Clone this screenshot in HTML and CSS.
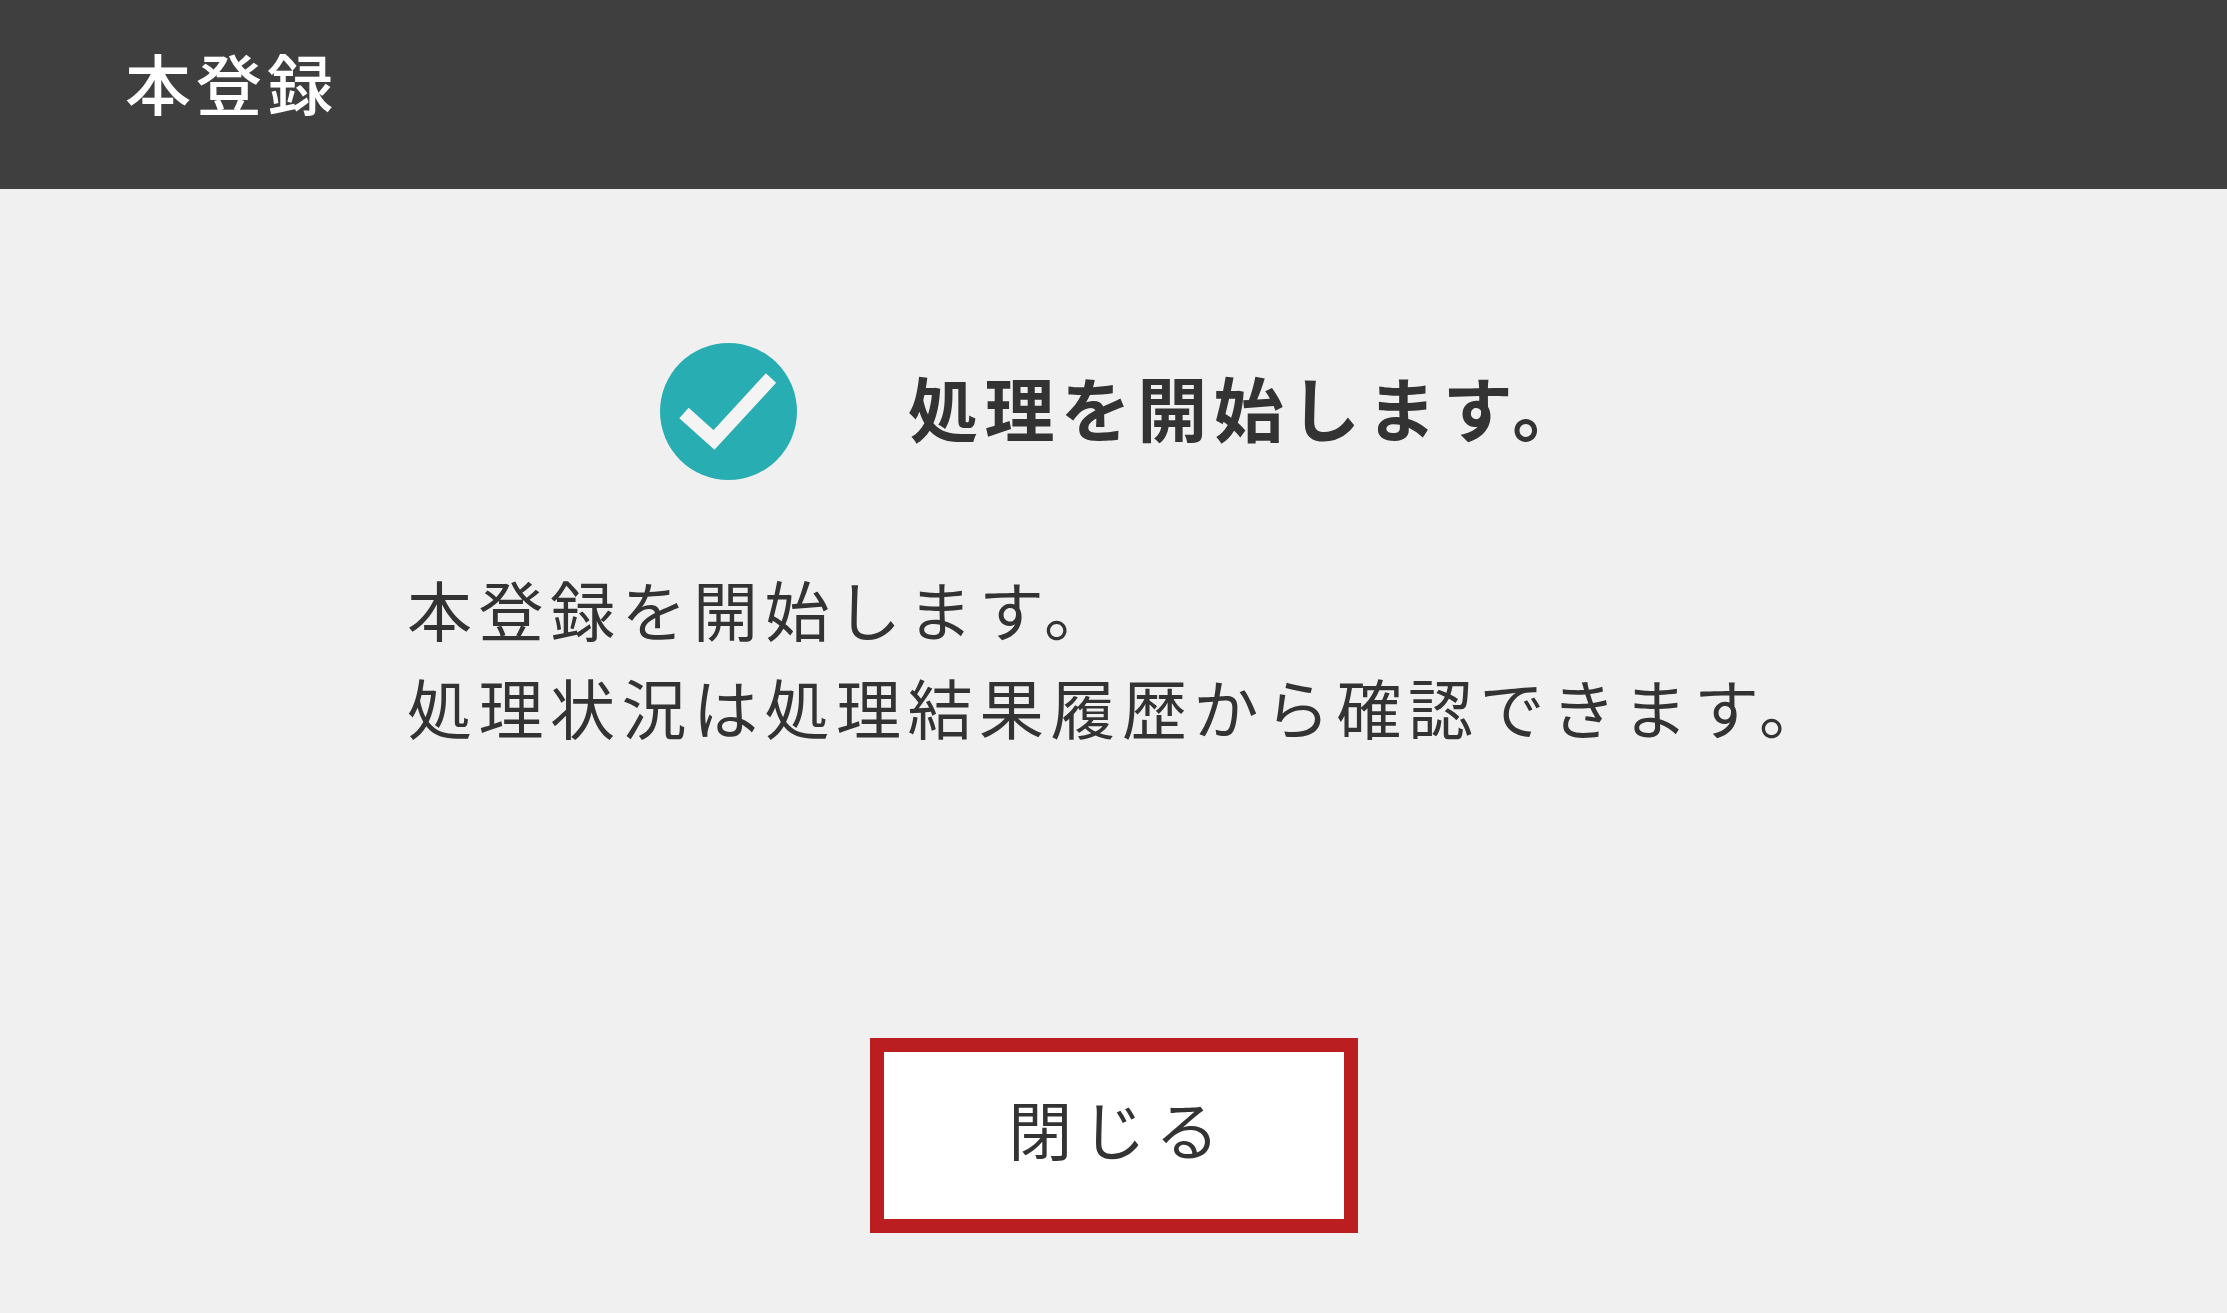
FILE: index.html
```html
<!DOCTYPE html>
<html lang="ja">
<head>
<meta charset="utf-8">
<title>本登録</title>
<link rel="stylesheet" href="styles.css">
</head>
<body>
<header class="bar"><h1 class="bar-title">本登録</h1></header>
<main class="panel">
  <div class="status">
    <svg class="status-icon" viewBox="0 0 137 137" aria-hidden="true">
      <circle cx="68.5" cy="68.5" r="68.5" fill="#27adb2"/>
      <path d="M24 70 L54 97 L111 35" fill="none" stroke="#f4f4f4" stroke-width="14"/>
    </svg>
    <h2 class="status-text">処理を開始します。</h2>
  </div>
  <p class="message">本登録を開始します。<br>処理状況は処理結果履歴から確認できます。</p>
  <div class="actions"><button class="close" type="button">閉じる</button></div>
</main>
</body>
</html>
```
FILE: styles.css
```css
* { box-sizing: border-box; }
html, body { margin: 0; height: 100%; }
body {
  background: #f0f0f0;
  color: #333;
  font-family: "Noto Sans CJK JP", "Noto Sans", sans-serif;
  overflow: hidden;
}
.bar {
  height: 189px;
  background: #3f3f3f;
  padding: 41px 0 0 125px;
}
.bar-title {
  margin: 0;
  color: #fff;
  font-size: 66px;
  font-weight: 500;
  letter-spacing: 5px;
  line-height: 80px;
}
.panel { display: flex; flex-direction: column; }
.status {
  display: flex;
  align-items: center;
  margin: 154px 0 0 660px;
  gap: 111px;
}
.status-icon { width: 137px; height: 137px; flex: none; }
.status-text {
  margin: -9px 0 0;
  font-size: 70px;
  font-weight: 700;
  letter-spacing: 6.4px;
  line-height: 80px;
}
.message {
  margin: 79px 0 0 407px;
  font-size: 65px;
  font-weight: 400;
  letter-spacing: 6.5px;
  line-height: 98px;
}
.actions { display: flex; justify-content: center; margin-top: 283px; }
.close {
  width: 488px;
  height: 195px;
  background: #fff;
  border: 14px solid #bb1e21;
  border-radius: 0;
  color: #333;
  font-family: inherit;
  font-size: 64px;
  font-weight: 400;
  letter-spacing: 9.5px;
  padding: 0 0 18px 10px;
}
```
